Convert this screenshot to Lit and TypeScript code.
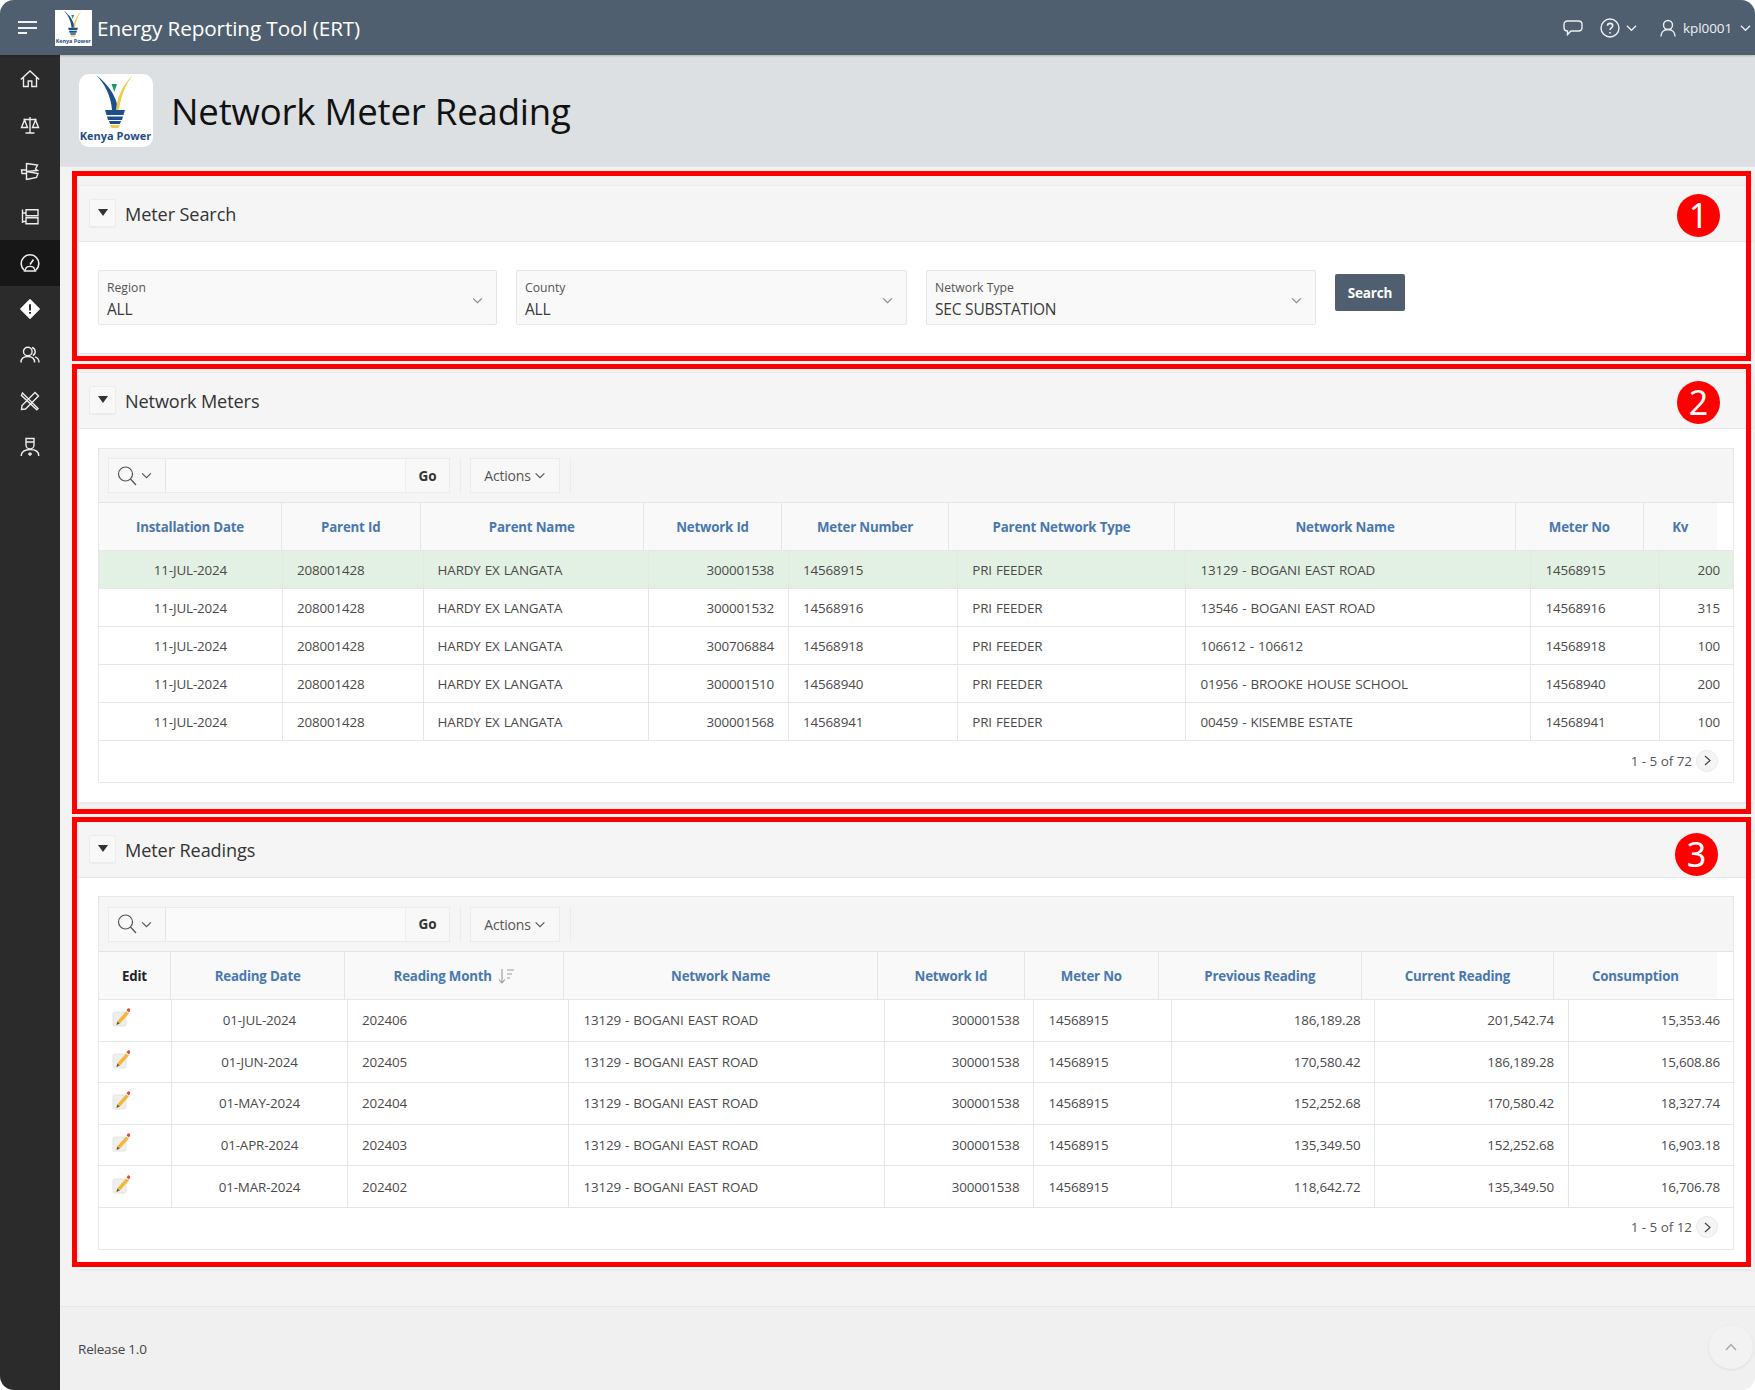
import { LitElement, html, css, svg } from "lit";
import { customElement } from "lit/decorators.js";

type Col = { h: string; w: number; bw: number; a: "l" | "c" | "r"; sort?: boolean; plain?: boolean };

const meterCols: Col[] = [
  { h: "Installation Date", w: 183, bw: 184, a: "c" },
  { h: "Parent Id", w: 138.5, bw: 140.6, a: "l" },
  { h: "Parent Name", w: 223.5, bw: 225, a: "l" },
  { h: "Network Id", w: 138, bw: 140.5, a: "r" },
  { h: "Meter Number", w: 167, bw: 169.2, a: "l" },
  { h: "Parent Network Type", w: 226, bw: 228.2, a: "l" },
  { h: "Network Name", w: 341, bw: 345, a: "l" },
  { h: "Meter No", w: 127.7, bw: 128.5, a: "l" },
  { h: "Kv", w: 73, bw: 75, a: "r" },
];
const meterRows = [
  ["11-JUL-2024", "208001428", "HARDY EX LANGATA", "300001538", "14568915", "PRI FEEDER", "13129 - BOGANI EAST ROAD", "14568915", "200"],
  ["11-JUL-2024", "208001428", "HARDY EX LANGATA", "300001532", "14568916", "PRI FEEDER", "13546 - BOGANI EAST ROAD", "14568916", "315"],
  ["11-JUL-2024", "208001428", "HARDY EX LANGATA", "300706884", "14568918", "PRI FEEDER", "106612 - 106612", "14568918", "100"],
  ["11-JUL-2024", "208001428", "HARDY EX LANGATA", "300001510", "14568940", "PRI FEEDER", "01956 - BROOKE HOUSE SCHOOL", "14568940", "200"],
  ["11-JUL-2024", "208001428", "HARDY EX LANGATA", "300001568", "14568941", "PRI FEEDER", "00459 - KISEMBE ESTATE", "14568941", "100"],
];
const readCols: Col[] = [
  { h: "Edit", w: 72, bw: 73, a: "l", plain: true },
  { h: "Reading Date", w: 174.3, bw: 176, a: "c" },
  { h: "Reading Month", w: 218.8, bw: 221.4, a: "l", sort: true },
  { h: "Network Name", w: 314, bw: 316, a: "l" },
  { h: "Network Id", w: 146.5, bw: 149, a: "r" },
  { h: "Meter No", w: 134.5, bw: 137.6, a: "l" },
  { h: "Previous Reading", w: 202.5, bw: 203.5, a: "r" },
  { h: "Current Reading", w: 192.6, bw: 193.5, a: "r" },
  { h: "Consumption", w: 162.4, bw: 166, a: "r" },
];
const nn = "13129 - BOGANI EAST ROAD";
const readRows = [
  ["", "01-JUL-2024", "202406", nn, "300001538", "14568915", "186,189.28", "201,542.74", "15,353.46"],
  ["", "01-JUN-2024", "202405", nn, "300001538", "14568915", "170,580.42", "186,189.28", "15,608.86"],
  ["", "01-MAY-2024", "202404", nn, "300001538", "14568915", "152,252.68", "170,580.42", "18,327.74"],
  ["", "01-APR-2024", "202403", nn, "300001538", "14568915", "135,349.50", "152,252.68", "16,903.18"],
  ["", "01-MAR-2024", "202402", nn, "300001538", "14568915", "118,642.72", "135,349.50", "16,706.78"],
];

const chevron = (cls: string) => html`<svg class=${cls} viewBox="0 0 12 8"><path d="M1 1.500 6 6.500 11 1.500" fill="none" stroke="currentColor" stroke-width="1.300"/></svg>`;

const logo = (cls: string) => html`<svg class=${cls} viewBox="0 0 74 73">
  <path d="M17 1C28 9 38 22 39 36H33C32 22 26 10 17 1Z" fill="#1d4f8c"/>
  <path d="M54 1C47 9 42 22 40 36H37C38 22 45 9 54 1Z" fill="#eecb4a"/>
  <path d="M32.500 10H38L35.300 18Z" fill="#1e9a6a"/>
  <path d="M26 36H46L44.500 41H27.500Z" fill="#1d4f8c"/>
  <path d="M28 42.500H44L43 46H29Z" fill="#1d4f8c"/>
  <path d="M30 47H42L41 50H31Z" fill="#1d4f8c"/>
  <path d="M31 51H41L39.500 54H32.500Z" fill="#eecb4a"/>
  <text x="36.500" y="66" text-anchor="middle" font-family="'Open Sans',sans-serif" font-weight="700" font-size="11" fill="#1f4e86">Kenya Power</text>
</svg>`;

const navIcons = [
  svg`<path d="M.8 10.500 10 2l9.200 8.500M3.500 8.500v9h4.700v-5.500h3.600v5.500h4.700v-9"/>`,
  svg`<path d="M10 2v15.500M5.500 18h9M3.500 4.500h13M4.500 5 1.500 12.500h6ZM15.500 5l-3 7.500h6Z"/>`,
  svg`<path d="M6.500 2v17M1.500 9H6.500v3.500H2ZM6.500 2.500 17.500 4l-2 4 2 1.500-11 1M6.500 10.500l11.500 2-1.500 4-10 2"/>`,
  svg`<path d="M2.500 2.500v13.500M2.500 6h3.500M2.500 14.500h3.500M6 2.800h12v6H6zM6 10.800h12v6H6z"/>`,
  svg`<path d="M4.200 17.200A8.800 8.800 0 1 1 15.800 17.200M10 11.500l3.500-5" stroke-width="1.600"/><path d="M5.800 15.500c.6-2.800 7.800-2.800 8.400 0l1.200 2.500H4.600Z"/>`,
  svg`<path d="M10 .8 19.200 10 10 19.200 .8 10Z" fill="#fff" stroke="#fff" stroke-linejoin="round"/><path d="M10 5.200v6.300M10 13v1.800" stroke="#2b2b2b" stroke-width="2"/>`,
  svg`<circle cx="7.800" cy="6.500" r="4.300"/><path d="M1 17.500c0-3.800 2.800-6 6.800-6s6.800 2.200 6.800 6M12 2.500a4.300 4.300 0 0 1 .8 8M15 11.800c2.300.8 4 2.800 4 5.700"/>`,
  svg`<path d="M2.500 2 18 17.500l-1.200 1.200L1.500 4.500ZM15 1.500l3.500 3.500L5.500 18 1.500 18.500 2 14.500Z"/>`,
  svg`<path d="M6 1.500h8v6.500a4 4 0 0 1-8 0ZM6 5h8M1.200 19c0-4.200 3.500-6.500 8.800-6.500s8.800 2.300 8.800 6.500M10 15.200v3.800M8 17h4"/>`,
];

const pencil = html`<svg class="pen" viewBox="0 0 20 20">
  <rect x="1" y="5" width="13" height="14" rx="1.500" fill="#eef0f0" stroke="#e2e4e4"/>
  <path d="M14 4.500 17 6.500 8 16.500 4.500 18 5.500 14Z" fill="#f4b73d"/>
  <path d="M14.500 3.500 15.800 1.500C16.500.8 18.500 2 18.200 3.200L17 5.500Z" fill="#dd4b39"/>
  <path d="M5.300 14.500 4.500 18 7.700 16.500Z" fill="#6b5a3a"/>
</svg>`;

@customElement("app-root")
export class AppRoot extends LitElement {
  static styles = css`
    :host { display: block; width: 100%; height: 1390px; background: #fff; font-family: "Open Sans", "Noto Sans", sans-serif; color: #404040; }
    * { box-sizing: border-box; }
    .app { height: 100%; display: grid; grid-template-columns: 60px 1fr; grid-template-rows: 55px 1fr; border-radius: 14px; overflow: hidden; background: #f3f3f3; }
    .top { grid-column: 1 / 3; background: #4f5f70; display: flex; align-items: center; color: #fff; box-shadow: 0 1px 2px rgba(0,0,0,.2); z-index: 2; }
    .burger { width: 19px; margin-left: 18px; display: flex; flex-direction: column; gap: 3.500px; }
    .burger i { display: block; height: 2px; background: #f0f2f4; }
    .burger i:nth-child(3) { width: 9px; }
    .smalllogo { width: 37px; height: 36px; background: #fff; margin-left: 18px; flex: none; }
    .apptitle { margin-left: 5px; font-size: 20.700px; font-weight: 500; letter-spacing: -.1px; white-space: nowrap; }
    .topright { margin-left: auto; display: flex; align-items: center; color: #eef0f2; font-size: 13.500px; padding-right: 4px; }
    .topright svg { display: block; fill: none; stroke: currentColor; stroke-width: 1.400; }
    .i-chat { width: 20px; height: 18px; }
    .i-help { width: 20px; height: 20px; margin-left: 17px; }
    .cv { width: 10px; height: 7px; }
    .topright .cv { margin-left: 6px; width: 11px; height: 8px; }
    .i-user { width: 16px; height: 18px; margin-left: 23px; }
    .uname { margin-left: 7px; letter-spacing: -.1px; }
    .uname + .cv { margin-left: 8px !important; }
    .side { background: #2b2b2b; padding-top: 1px; }
    .nav { height: 46px; display: flex; align-items: center; justify-content: center; }
    .nav.on { background: #171717; }
    .nav svg { width: 20px; height: 20px; fill: none; stroke: #ededed; stroke-width: 1.400; }
    .main { display: flex; flex-direction: column; min-width: 0; }
    .titlebar { height: 112px; background: #dce0e3; display: flex; align-items: center; padding-left: 19px; gap: 18px; flex: none; border-bottom: 1px solid #e3e5e7; }
    .biglogo { width: 74px; height: 73px; background: #fff; border-radius: 10px; flex: none; }
    h1 { margin: 1px 0 0; font-size: 36.600px; font-weight: 400; color: #111; letter-spacing: -.2px; }
    .content { flex: 1; padding: 18px 2px 0 19px; display: flex; flex-direction: column; gap: 19px; }
    .card { position: relative; background: #fff; box-shadow: 0 1px 3px rgba(0,0,0,.08); }
    .annot { position: absolute; border: 5px solid #f00; pointer-events: none; z-index: 3; }
    .a1 { left: -7px; right: 2px; top: -14px; bottom: -8px; }
    .a2 { left: -7px; right: 2px; top: -8px; bottom: -12px; }
    .a3 { left: -7px; right: 2px; top: -4px; bottom: 2px; }
    .num { position: absolute; width: 43px; height: 43px; border-radius: 50%; background: #f00; color: #fff; font-size: 34px; line-height: 43px; text-align: center; font-family: "Noto Sans", sans-serif; z-index: 4; left: 1598px; }
    .n1 { top: 9px; }
    .n2 { top: 9px; }
    .n3 { top: 12px; left: 1596px; }
    .chead { height: 57px; background: #f5f5f5; border-bottom: 1px solid #e6e6e6; display: flex; align-items: center; padding-left: 10px; gap: 10px; border-top: 1px solid #ececec; }
    .toggle { width: 27px; height: 28px; background: #f8f8f8; border: 1px solid #ececec; border-radius: 2px; display: flex; align-items: center; justify-content: center; margin-top: -1px; box-shadow: 0 1px 1px rgba(0,0,0,.04); }
    .toggle i { display: block; width: 0; height: 0; border-left: 5px solid transparent; border-right: 5px solid transparent; border-top: 7px solid #333; margin-top: -2px; }
    h2 { margin: 0 0 0 -1px; font-size: 18.100px; font-weight: 400; color: #333; letter-spacing: -.1px; }
    .searchbody { display: flex; padding: 28px 19px 28px; align-items: flex-start; gap: 19px; }
    .field { height: 55px; background: #f9f9f9; border: 1px solid #e6e6e6; border-radius: 2px; padding: 8px 8px 0; position: relative; }
    .f1 { width: 399px; } .f2 { width: 391px; } .f3 { width: 390px; }
    .flabel { font-size: 12.200px; line-height: 17px; color: #555; }
    .fvalue { font-size: 15.500px; line-height: 22px; margin-top: 2px; color: #3a3a3a; letter-spacing: -.2px; }
    .field .cv { position: absolute; right: 13px; top: 26px; color: #888; width: 11px; }
    .btn { margin-top: 4px; width: 70px; height: 37px; background: #4f5f70; color: #fff; border: 0; border-radius: 2px; font: 700 13.500px "Open Sans", sans-serif; letter-spacing: -.2px; }
    .body { padding: 19px 19px 19px; }
    .b3 { padding-top: 18px; }
    .report { border: 1px solid #e8e8e8; }
    .tb { background: #f5f5f5; border-bottom: 1px solid #e4e4e4; display: flex; align-items: center; padding-left: 9px; height: 54px; }
    .b3 .tb { height: 55px; }
    .sgroup { display: flex; width: 342px; height: 35px; background: #f8f8f8; border: 1px solid #ebebeb; }
    .sicon { width: 57px; display: flex; align-items: center; padding-left: 8px; gap: 4px; border-right: 1px solid #e6e6e6; color: #555; }
    .sicon svg.mag { width: 20px; height: 22px; fill: none; stroke: #555; stroke-width: 1.200; }
    .sicon .cv { width: 11px; }
    .sinput { flex: 1; background: #fafafa; }
    .go { width: 44px; display: flex; align-items: center; justify-content: center; font-size: 13.500px; font-weight: 700; color: #333; border-left: 1px solid #eee; }
    .sep { width: 1px; height: 35px; background: #ebebeb; margin: 0 9px 0 10px; }
    .actions { width: 90px; height: 35px; background: #f8f8f8; border: 1px solid #ebebeb; display: flex; align-items: center; justify-content: center; gap: 3px; font-size: 14px; color: #555; letter-spacing: -.2px; }
    .actions .cv { width: 12px; }
    .hrow, .row { display: grid; }
    .hrow { height: 47px; }
    .hc { background: #f9f9f9; border-right: 1px solid #e6e6e6; display: flex; align-items: center; justify-content: center; font-size: 13.300px; font-weight: 700; color: #4a78ae; letter-spacing: -.2px; white-space: nowrap; gap: 5px; }
    .hc:last-child { border-right: 0; }
    .hc.plain { color: #222; }
    .sorticon { width: 18px; height: 18px; fill: none; stroke: #9a9a9a; stroke-width: 1.100; }
    .row { border-top: 1px solid #e6e6e6; }
    .r1 .row { height: 38px; }
    .r2 .row { height: 41.600px; }
    .row.sel { background: #e2f1e3; }
    .c { display: flex; align-items: center; padding: 0 14px; font-size: 13.400px; color: #4a4a4a; border-right: 1px solid #e6e6e6; white-space: nowrap; letter-spacing: -.15px; word-spacing: .8px; }
    .c:last-child { border-right: 0; padding-right: 15px; }
    .c.a-c { justify-content: center; }
    .c.a-r { justify-content: flex-end; }
    .pen { width: 20px; height: 20px; margin: -6px 0 0 -1px; }
    .pager { height: 42px; border-top: 1px solid #e6e6e6; display: flex; align-items: center; justify-content: flex-end; padding: 0 15px 2px 0; font-size: 13.500px; color: #555; gap: 4px; letter-spacing: -.05px; }
    .next { width: 22px; height: 22px; border-radius: 50%; background: #f5f5f5; border: 1px solid #eaeaea; display: flex; align-items: center; justify-content: center; color: #444; }
    .next svg { width: 7px; height: 11px; fill: none; stroke: currentColor; stroke-width: 1.200; }
    .foot { height: 84px; flex: none; background: #f0f0f0; border-top: 1px solid #e8e8e8; display: flex; align-items: center; padding: 0 2px 0 18px; font-size: 13.500px; color: #444; justify-content: space-between; letter-spacing: -.2px; }
    .up { width: 44px; height: 44px; border-radius: 50%; background: #f2f2f2; box-shadow: 0 1px 3px rgba(0,0,0,.08); display: flex; align-items: center; justify-content: center; color: #aaa; margin-top: -4px; }
    .up svg { width: 12px; height: 8px; fill: none; stroke: currentColor; stroke-width: 1.500; }
  `;

  private report(cols: Col[], rows: string[][], pager: string, rowClass: string, sel: number) {
    const bodyTpl = cols.map((c) => c.bw + "px").join(" ");
    const headTpl = cols.map((c) => c.w + "px").join(" ");
    return html`<div class="report ${rowClass}">
      <div class="tb">
        <div class="sgroup">
          <div class="sicon"><svg class="mag" viewBox="0 0 20 22"><circle cx="8.500" cy="9" r="7"/><path d="M13.500 14 19 20"/></svg>${chevron("cv")}</div>
          <div class="sinput"></div>
          <div class="go">Go</div>
        </div>
        <div class="sep"></div>
        <div class="actions">Actions ${chevron("cv")}</div>
        <div class="sep"></div>
      </div>
      <div class="hrow" style="grid-template-columns:${headTpl}">
        ${cols.map((c) => html`<div class="hc ${c.plain ? "plain" : ""}">${c.h}${c.sort ? html`<svg class="sorticon" viewBox="0 0 18 18"><path d="M5 2v14M2 12.500 5 16l3-3.500M10 3h7M10 7h5M10 11h3"/></svg>` : ""}</div>`)}
      </div>
      ${rows.map((r, i) => html`<div class="row ${i === sel ? "sel" : ""}" style="grid-template-columns:${bodyTpl}">
        ${r.map((v, j) => html`<div class="c a-${cols[j].a}">${cols[j].plain ? pencil : v}</div>`)}
      </div>`)}
      <div class="pager">${pager}<span class="next"><svg viewBox="0 0 7 11"><path d="M1 1 6 5.500 1 10"/></svg></span></div>
    </div>`;
  }

  private head(title: string) {
    return html`<div class="chead"><div class="toggle"><i></i></div><h2>${title}</h2></div>`;
  }

  render() {
    return html`<div class="app">
      <header class="top">
        <div class="burger"><i></i><i></i><i></i></div>
        ${logo("smalllogo")}
        <div class="apptitle">Energy Reporting Tool (ERT)</div>
        <div class="topright">
          <svg class="i-chat" viewBox="0 0 20 18"><path d="M4.500 2h11C17.500 2 19 3.300 19 5.500v3c0 2.200-1.500 3.500-3.500 3.500H8l-3.500 3.500V12C2.500 12 1 10.700 1 8.500v-3C1 3.300 2.500 2 4.500 2Z"/></svg>
          <svg class="i-help" viewBox="0 0 20 20"><circle cx="10" cy="10" r="9"/><path d="M7.500 7.800c0-3.300 5.200-3.300 5.200 0 0 2-2.700 2-2.700 4.200M10 14v1.500" stroke-width="1.600"/></svg>
          ${chevron("cv")}
          <svg class="i-user" viewBox="0 0 16 18"><circle cx="8" cy="6" r="4.500"/><path d="M1 17.500c0-4 2.500-7 7-7s7 3 7 7"/></svg>
          <span class="uname">kpl0001</span>
          ${chevron("cv")}
        </div>
      </header>
      <nav class="side">
        ${navIcons.map((p, i) => html`<div class="nav ${i === 4 ? "on" : ""}"><svg viewBox="0 0 20 20">${p}</svg></div>`)}
      </nav>
      <main class="main">
        <div class="titlebar">${logo("biglogo")}<h1>Network Meter Reading</h1></div>
        <div class="content">
          <section class="card">
            <div class="annot a1"></div><div class="num n1">1</div>
            ${this.head("Meter Search")}
            <div class="searchbody">
              <div class="field f1"><div class="flabel">Region</div><div class="fvalue">ALL</div>${chevron("cv")}</div>
              <div class="field f2"><div class="flabel">County</div><div class="fvalue">ALL</div>${chevron("cv")}</div>
              <div class="field f3"><div class="flabel">Network Type</div><div class="fvalue">SEC SUBSTATION</div>${chevron("cv")}</div>
              <button class="btn">Search</button>
            </div>
          </section>
          <section class="card">
            <div class="annot a2"></div><div class="num n2">2</div>
            ${this.head("Network Meters")}
            <div class="body">${this.report(meterCols, meterRows, "1 - 5 of 72", "r1", 0)}</div>
          </section>
          <section class="card">
            <div class="annot a3"></div><div class="num n3">3</div>
            ${this.head("Meter Readings")}
            <div class="body b3">${this.report(readCols, readRows, "1 - 5 of 12", "r2", -1)}</div>
          </section>
        </div>
        <footer class="foot"><span>Release 1.0</span><div class="up"><svg viewBox="0 0 12 8"><path d="M1 7 6 1.500 11 7"/></svg></div></footer>
      </main>
    </div>`;
  }
}
